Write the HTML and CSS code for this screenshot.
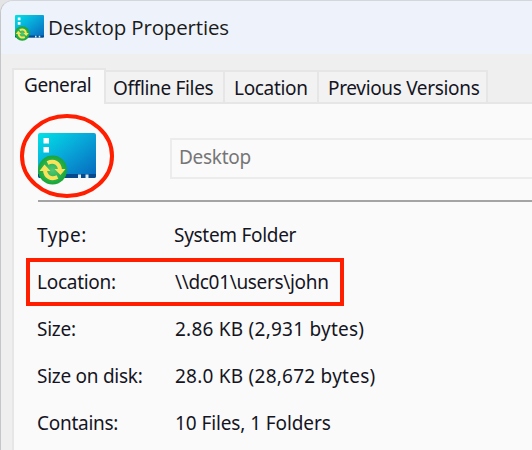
FILE: index.html
```
<!DOCTYPE html>
<html lang="en">
<head>
<meta charset="utf-8">
<title>Desktop Properties</title>
<link rel="stylesheet" href="styles.css">
</head>
<body>
<svg class="defs" width="0" height="0" aria-hidden="true">
  <defs>
    <linearGradient id="screen" x1="0" y1="0" x2="1" y2="1">
      <stop offset="0" stop-color="#00e3e6"/>
      <stop offset=".45" stop-color="#08a9d9"/>
      <stop offset="1" stop-color="#0665bd"/>
    </linearGradient>
    <radialGradient id="ball">
      <stop offset="0" stop-color="#55c774"/>
      <stop offset=".7" stop-color="#25b04d"/>
      <stop offset="1" stop-color="#1ba532"/>
    </radialGradient>
    <symbol id="desktop" viewBox="0 0 58 52">
      <path d="M2 0H56Q58 0 58 2V43Q58 45 56 45H2Q0 45 0 43V2Q0 0 2 0Z" fill="url(#screen)"/>
      <path d="M0 41H58V43Q58 45 56 45H2Q0 45 0 43Z" fill="#07498a"/>
      <path d="M5.500 5H11V10.500H5.500ZM5.500 14H11V19.500H5.500Z" fill="#fff"/>
      <path d="M40 41.500H43V45H40ZM47.500 41.500H50.500V45H47.500Z" fill="#d8edfa"/>
      <circle cx="14.500" cy="37" r="14.500" fill="url(#ball)"/>
      <path d="M9.500 30C16 27 21.500 30 22 37M19.500 44C13 47 7.500 44 7 37" fill="none" stroke="#f8e35b" stroke-width="4"/>
      <path d="M16.500 36H27.500L22.500 42ZM1.500 38L6.500 31.500L12.500 38Z" fill="#f8e35b"/>
    </symbol>
  </defs>
</svg>
<div class="window">
  <header class="titlebar">
    <svg class="title-icon"><use href="#desktop"/></svg>
    <h1 class="title">Desktop Properties</h1>
  </header>
  <nav class="tabs">
    <div class="tab active">General</div>
    <div class="tab offline">Offline Files</div>
    <div class="tab location">Location</div>
    <div class="tab versions">Previous Versions</div>
  </nav>
  <main class="panel">
    <div class="identity">
      <div class="icon-wrap">
        <svg class="folder-icon"><use href="#desktop"/></svg>
        <svg class="ring" viewBox="0 0 94 84"><ellipse cx="47" cy="42" rx="45" ry="40"/></svg>
      </div>
      <div class="name">Desktop</div>
    </div>
    <div class="rule"></div>
    <dl class="details">
      <div class="row type"><dt>Type:</dt><dd>System Folder</dd></div>
      <div class="row marked"><dt>Location:</dt><dd>\\dc01\users\john</dd></div>
      <div class="row size"><dt>Size:</dt><dd>2.86 KB (2,931 bytes)</dd></div>
      <div class="row size"><dt>Size on disk:</dt><dd>28.0 KB (28,672 bytes)</dd></div>
      <div class="row contains"><dt>Contains:</dt><dd>10 Files, 1 Folders</dd></div>
    </dl>
  </main>
</div>
</body>
</html>
```
FILE: styles.css
```
* { box-sizing: border-box; }
body {
  margin: 0;
  background: #e4e4e4;
  font: 19px/24px "Noto Sans", "Open Sans", sans-serif;
  color: #15151f;
  overflow: hidden;
}
.defs { position: absolute; }
.window {
  width: 540px;
  height: 460px;
  border: 1px solid #c4c6c9;
  border-top-color: #d3d6da;
  border-radius: 13px 0 0 0;
  background: #efefef;
  overflow: hidden;
}
.titlebar {
  height: 53px;
  display: flex;
  background: #eef3fb;
}
.title-icon { width: 29px; height: 26px; margin: 14px 0 0 14px; }
.title {
  margin: 12px 0 0 4px;
  font: 400 20.5px/28px "Open Sans", sans-serif;
  letter-spacing: -0.15px;
  color: #1b1b1b;
  white-space: nowrap;
}
.tabs {
  display: flex;
  align-items: flex-end;
  height: 50px;
  padding-left: 11px;
  margin-bottom: -2px;
}
.tab {
  height: 34px;
  border: 2px solid #e6e6e6;
  border-left-width: 0;
  background: #f2f2f2;
  padding: 4px 0 0 7px;
  letter-spacing: -0.33px;
  white-space: nowrap;
}
.tab.active {
  width: 94px;
  height: 36px;
  border-left-width: 2px;
  border-bottom: 0;
  background: #fafafa;
  padding: 3px 0 0 10px;
  letter-spacing: -0.4px;
  position: relative;
}
.offline { width: 119px; }
.tab.location { width: 94px; padding-left: 9px; }
.tab.versions { width: 169px; padding-left: 9px; }
.panel {
  height: 360px;
  margin-left: 11px;
  border: 2px solid #e6e6e6;
  border-width: 2px 0 0 2px;
  background: #fafafa;
}
.identity { display: flex; height: 96px; padding: 29px 0 0 24px; }
.icon-wrap { position: relative; width: 58px; height: 52px; margin-right: 74px; }
.folder-icon { width: 58px; height: 52px; display: block; }
.ring {
  position: absolute;
  left: -18px;
  top: -19px;
  width: 94px;
  height: 84px;
}
.ring ellipse { fill: none; stroke: #ff1e00; stroke-width: 4; }
.name {
  flex: 1;
  height: 41px;
  margin-top: 5px;
  border: 2px solid #ececec;
  padding: 5px 0 0 7px;
  letter-spacing: -0.3px;
  color: #767676;
}
.rule { height: 2px; margin-left: 24px; background: #a4a4a4; }
.details { margin: 9px 0 0 12px; }
.row {
  display: flex;
  align-items: center;
  width: 318px;
  height: 47px;
  padding: 0 0 0 11px;
  white-space: nowrap;
}
.marked { height: 48px; margin-bottom: -1px; outline: 4px solid #ff1e00; outline-offset: -4px; }
dt { flex: none; width: 138px; letter-spacing: -0.27px; }
dd { margin: 0; letter-spacing: -0.3px; }
.type dt { letter-spacing: 0.5px; }
.type dd { margin-left: -1px; }
.marked dd { letter-spacing: -0.33px; }
.size dd { letter-spacing: 0.24px; }
.contains dd { letter-spacing: -0.1px; }
```
